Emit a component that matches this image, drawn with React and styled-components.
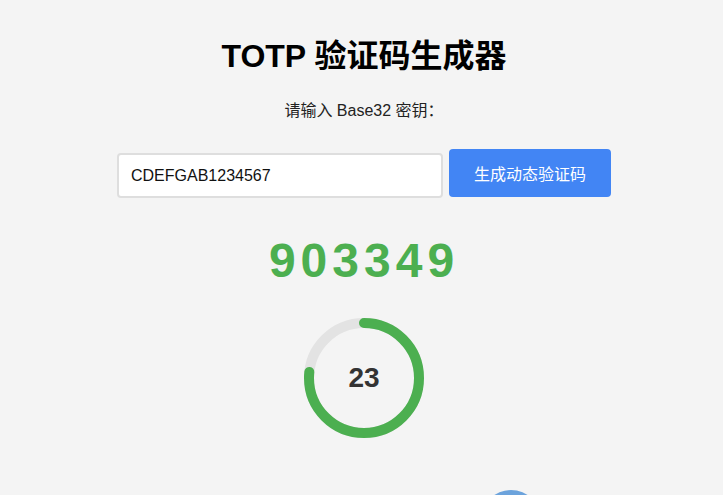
import React from 'react'
import styled, { createGlobalStyle } from 'styled-components'

const GlobalStyle = createGlobalStyle`
    html, body {
        margin: 0;
        padding: 0;
        background: #f4f4f4;
        font-family: "Liberation Sans", Arial, "Noto Sans CJK SC", sans-serif;
        color: #000;
        overflow: hidden;
    }
`

const Page = styled.main`
    display: flex;
    flex-direction: column;
    align-items: center;
    padding: 38px 0 0 5px;
`

const Title = styled.h1`
    margin: 0;
    font-size: 32px;
    line-height: 37px;
    font-weight: bold;
`

const Label = styled.label`
    display: block;
    margin-top: 27px;
    font-size: 16px;
    line-height: 18px;
    color: #222;
`

const Row = styled.div`
    display: flex;
    align-items: flex-start;
    gap: 6px;
    margin-top: 29px;
`

const Input = styled.input`
    box-sizing: border-box;
    width: 326px;
    height: 45px;
    margin-top: 4px;
    padding: 0 12px;
    border: 2px solid #dedede;
    border-radius: 4px;
    background: #fff;
    font-family: inherit;
    font-size: 16px;
    color: #111;
    outline: none;
`

const Button = styled.button`
    width: 162px;
    height: 48px;
    border: none;
    border-radius: 4px;
    background: #4285f4;
    color: #fff;
    font-family: inherit;
    font-size: 16px;
    cursor: pointer;
`

const Code = styled.div`
    margin-top: 35px;
    font-size: 48px;
    line-height: 55px;
    font-weight: bold;
    letter-spacing: 5px;
    color: #4caf50;
`

const Timer = styled.div`
    position: relative;
    width: 120px;
    height: 120px;
    margin-top: 30px;
`

const Count = styled.span`
    position: absolute;
    inset: 0;
    display: flex;
    align-items: center;
    justify-content: center;
    font-size: 28px;
    font-weight: bold;
    color: #333;
`

const Footer = styled.div`
    width: 494px;
    display: flex;
    justify-content: flex-end;
    margin-top: 52px;
    padding-right: 70px;
    box-sizing: border-box;
`

const Bubble = styled.div`
    width: 60px;
    height: 60px;
    border-radius: 50%;
    background: #6ca3dc;
`

const R = 55
const C = 2 * Math.PI * R

export default function App() {
    const remaining = 23
    const offset = C * (1 - remaining / 30)

    return (
        <>
            <GlobalStyle />
            <Page>
                <Title>TOTP 验证码生成器</Title>
                <Label htmlFor="secret">请输入 Base32 密钥：</Label>
                <Row>
                    <Input id="secret" defaultValue="CDEFGAB1234567" />
                    <Button type="button">生成动态验证码</Button>
                </Row>
                <Code>903349</Code>
                <Timer>
                    <svg width="120" height="120" viewBox="0 0 120 120" style={{ transform: 'rotate(-90deg)' }}>
                        <circle cx="60" cy="60" r={R} fill="none" stroke="#e3e3e3" strokeWidth="10" />
                        <circle
                            cx="60"
                            cy="60"
                            r={R}
                            fill="none"
                            stroke="#4caf50"
                            strokeWidth="10"
                            strokeLinecap="round"
                            strokeDasharray={C}
                            strokeDashoffset={offset}
                        />
                    </svg>
                    <Count>{remaining}</Count>
                </Timer>
                <Footer>
                    <Bubble />
                </Footer>
            </Page>
        </>
    )
}
